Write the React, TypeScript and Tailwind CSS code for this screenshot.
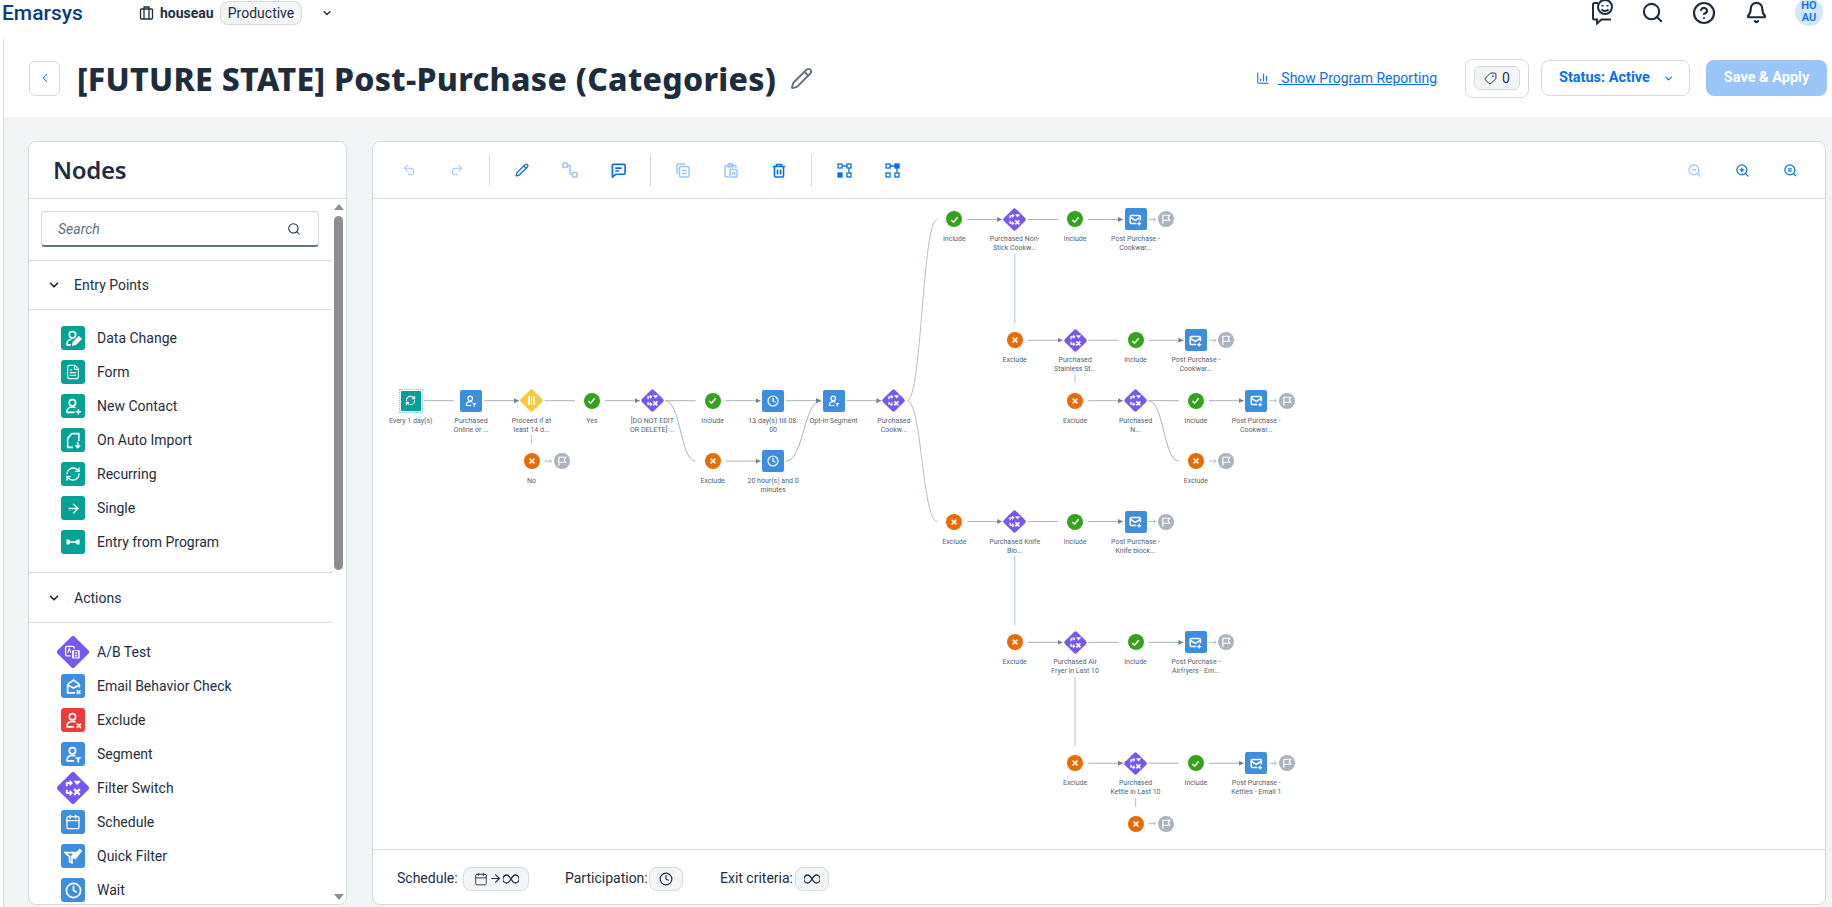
import {
  ArrowRight, Bell, Calendar, ChevronDown, ChevronLeft, CircleHelp, Clock, FileText, Pencil,
  Redo2, RefreshCw, Search, Tag, Undo2, ZoomIn, ZoomOut, ChartColumn,
} from 'lucide-react'
import type { ReactNode } from 'react'

const sans = 'font-["Noto_Sans",sans-serif]'
const ui = 'font-["Roboto",sans-serif]'

// flow canvas sits on a grid of 60.4px, origin is the first entry node
const ORIGIN_X = 373
const ORIGIN_Y = 199
const gx = (c: number) => 410.7 + 60.4 * c - ORIGIN_X
const gy = (r: number) => 400.7 + 60.42 * r - ORIGIN_Y

type Kind = 'entry' | 'segment' | 'yellow' | 'yes' | 'no' | 'switch' | 'clock' | 'mail' | 'flag'
type FlowNode = { c: number; r: number; kind: Kind; label?: string[] }

const branch = (
  c: number,
  r: number,
  first: string[],
  second: string[],
): FlowNode[] => [
  { c, r, kind: 'no', label: ['Exclude'] },
  { c: c + 1, r, kind: 'switch', label: first },
  { c: c + 2, r, kind: 'yes', label: ['Include'] },
  { c: c + 3, r, kind: 'mail', label: second },
  { c: c + 3.5, r, kind: 'flag' },
]

const NODES: FlowNode[] = [
  { c: 0, r: 0, kind: 'entry', label: ['Every 1 day(s)'] },
  { c: 1, r: 0, kind: 'segment', label: ['Purchased', 'Online or ...'] },
  { c: 2, r: 0, kind: 'yellow', label: ['Proceed if at', 'least 14 d...'] },
  { c: 3, r: 0, kind: 'yes', label: ['Yes'] },
  { c: 4, r: 0, kind: 'switch', label: ['[DO NOT EDIT', 'OR DELETE] ...'] },
  { c: 5, r: 0, kind: 'yes', label: ['Include'] },
  { c: 6, r: 0, kind: 'clock', label: ['13 day(s) till 08:', '00'] },
  { c: 7, r: 0, kind: 'segment', label: ['Opt-in Segment'] },
  { c: 8, r: 0, kind: 'switch', label: ['Purchased', 'Cookw...'] },
  { c: 2, r: 1, kind: 'no', label: ['No'] },
  { c: 2.5, r: 1, kind: 'flag' },
  { c: 5, r: 1, kind: 'no', label: ['Exclude'] },
  { c: 6, r: 1, kind: 'clock', label: ['20 hour(s) and 0', 'minutes'] },
  { c: 9, r: -3, kind: 'yes', label: ['Include'] },
  { c: 10, r: -3, kind: 'switch', label: ['Purchased Non-', 'Stick Cookw...'] },
  { c: 11, r: -3, kind: 'yes', label: ['Include'] },
  { c: 12, r: -3, kind: 'mail', label: ['Post Purchase -', 'Cookwar...'] },
  { c: 12.5, r: -3, kind: 'flag' },
  ...branch(10, -1, ['Purchased', 'Stainless St...'], ['Post Purchase -', 'Cookwar...']),
  ...branch(11, 0, ['Purchased', 'N...'], ['Post Purchase -', 'Cookwar...']),
  { c: 13, r: 1, kind: 'no', label: ['Exclude'] },
  { c: 13.5, r: 1, kind: 'flag' },
  ...branch(9, 2, ['Purchased Knife', 'Blo...'], ['Post Purchase -', 'Knife block...']),
  ...branch(10, 4, ['Purchased Air', 'Fryer in Last 10'], ['Post Purchase -', 'Airfryers - Em...']),
  ...branch(11, 6, ['Purchased', 'Kettle in Last 10'], ['Post Purchase -', 'Kettles - Email 1']),
  { c: 12, r: 7, kind: 'no', label: ['Exclude'] },
  { c: 12.5, r: 7, kind: 'flag' },
]

// [from column, row, has arrow head]
const LINKS: [number, number, boolean][] = [
  [0, 0, false], [1, 0, true], [2, 0, false], [3, 0, true], [4, 0, false], [5, 0, true], [6, 0, true], [7, 0, true],
  [5, 1, true],
  [9, -3, true], [10, -3, false], [11, -3, true],
  [10, -1, true], [11, -1, false], [12, -1, true],
  [11, 0, true], [12, 0, false], [13, 0, true],
  [9, 2, true], [10, 2, false], [11, 2, true],
  [10, 4, true], [11, 4, false], [12, 4, true],
  [11, 6, true], [12, 6, false], [13, 6, true],
]

// [column, first row offset in px from page, second]
const VERTICALS: [number, number, number][] = [
  [2, 435, 444], [10, 254, 323], [11, 375, 383], [10, 556, 625], [11, 677, 746], [12, 798, 807],
]

// [from column, row] of the little arrow in front of a flag
const FLAG_ARROWS: [number, number][] = [
  [2, 1], [12, -3], [13, -1], [14, 0], [13, 1], [12, 2], [13, 4], [14, 6], [12, 7],
]

const curve = (x1: number, y1: number, x2: number, y2: number) => {
  const mx = (x1 + x2) / 2
  return `M${x1} ${y1} C${mx} ${y1} ${mx} ${y2} ${x2} ${y2}`
}

function FlowLines() {
  return (
    <svg className="absolute inset-0" width="1454" height="643" fill="none">
      <defs>
        <marker id="head" markerWidth="6" markerHeight="6" refX="5" refY="2.5" orient="auto">
          <path d="M0 0L5 2.5L0 5z" fill="#72818f" />
        </marker>
      </defs>
      {LINKS.map(([c, r, arrow]) => (
        <path
          key={`${c}:${r}`}
          d={`M${gx(c) + 13} ${gy(r)}H${gx(c + 1) - (arrow ? 12.5 : 17)}`}
          stroke="#a9b4bf"
          markerEnd={arrow ? 'url(#head)' : undefined}
        />
      ))}
      {VERTICALS.map(([c, a, b]) => (
        <path key={`${c}:${a}`} d={`M${gx(c)} ${a - ORIGIN_Y}V${b - ORIGIN_Y}`} stroke="#c3cad1" strokeWidth="1.2" />
      ))}
      {FLAG_ARROWS.map(([c, r]) => (
        <path
          key={`${c}:${r}`}
          d={`M${gx(c) + 13} ${gy(r)}h7m-2 -2l2 2l-2 2`}
          stroke="#b4bdc6"
        />
      ))}
      <path d={curve(gx(4) + 13, gy(0), gx(5) - 17, gy(1))} stroke="#a9b4bf" />
      <path d={curve(gx(6) + 13, gy(1), gx(7) - 12.5, gy(0))} stroke="#a9b4bf" markerEnd="url(#head)" />
      <path d={curve(gx(8) + 13, gy(0), gx(9) - 17, gy(-3))} stroke="#b4bec8" />
      <path d={curve(gx(8) + 13, gy(0), gx(9) - 17, gy(2))} stroke="#b4bec8" />
      <path d={curve(gx(12) + 13, gy(0), gx(13) - 17, gy(1))} stroke="#a9b4bf" />
    </svg>
  )
}

function SwitchGlyph({ size = 14 }: { size?: number }) {
  return (
    <svg width={size} height={size} viewBox="0 0 16 16" fill="none" stroke="#fff" strokeWidth="1.7" className="-rotate-45 shrink-0">
      <path d="M6.500 3.500H2.500v3M6.500 12.500h-4v-3" />
      <path d="M5 1.500l2 2-2 2M5 10.500l2 2-2 2" strokeWidth="1.400" />
      <path d="M8.500 1.500h6.500l-3.250 4z" fill="#fff" stroke="none" />
      <path d="M9 9l5 5M14 9l-5 5" strokeWidth="2" />
    </svg>
  )
}

function MailGlyph({ size = 13 }: { size?: number }) {
  return (
    <svg width={size} height={size} viewBox="0 0 16 16" fill="none" stroke="#fff" strokeWidth="1.6">
      <path d="M9.500 14H2.500V6L8 2l5.500 4v3" />
      <path d="M2.500 6.500L8 9.500l5.500-3" />
      <path d="M11 11.500l3.500 3.500M14.500 11.500L11 15" strokeWidth="1.500" />
    </svg>
  )
}

// envelope used on the send-email nodes of the canvas
function SendGlyph() {
  return (
    <svg width="13" height="13" viewBox="0 0 16 16" fill="none" stroke="#fff" strokeWidth="1.900">
      <path d="M9 13H3a1.500 1.500 0 0 1-1.500-1.500v-7A1.500 1.500 0 0 1 3 3h9.500A1.500 1.500 0 0 1 14 4.500V9" />
      <path d="M2 5.500l5.750 3.500 5.750-3.500" />
      <path d="M12.500 10.500v5M10 13h5" strokeWidth="1.600" />
    </svg>
  )
}

function UserFilterGlyph({ size = 13 }: { size?: number }) {
  return (
    <svg width={size} height={size} viewBox="0 0 16 16" fill="none" stroke="#fff" strokeWidth="1.6">
      <circle cx="7" cy="4.500" r="3" />
      <path d="M8.500 14H2c-.7-3 1.500-5.200 5-5.200 1 0 2 .2 2.800.6" />
      <path d="M9.500 10.500h6l-3 3.400z" fill="#fff" stroke="none" />
      <path d="M12.500 13v2.500" />
    </svg>
  )
}

function FlagGlyph() {
  return (
    <svg width="10" height="10" viewBox="0 0 16 16" fill="none" stroke="#fff" strokeWidth="1.900">
      <path d="M3 15.500V2h11l-2.500 4 2.500 4H3" />
    </svg>
  )
}

function NodeShape({ kind }: { kind: Kind }) {
  if (kind === 'entry') {
    return (
      <div className="border border-dotted border-[#8fc7e6] p-[1px]">
        <div className="w-[20px] h-[20px] bg-[#04a197] rounded-[1px] flex items-center justify-center">
          <RefreshCw size={11} color="#fff" strokeWidth={2.2} />
        </div>
      </div>
    )
  }
  if (kind === 'segment' || kind === 'clock' || kind === 'mail') {
    return (
      <div className="w-[22px] h-[22px] bg-[#3f8ede] rounded-[2px] flex items-center justify-center">
        {kind === 'segment' && <UserFilterGlyph size={12} />}
        {kind === 'clock' && <Clock size={12} color="#fff" strokeWidth={2.4} />}
        {kind === 'mail' && <SendGlyph />}
      </div>
    )
  }
  if (kind === 'yellow' || kind === 'switch') {
    return (
      <div className={`w-[17px] h-[17px] rotate-45 rounded-[2px] flex items-center justify-center ${kind === 'yellow' ? 'bg-[#fdc837]' : 'bg-[#7358f5]'}`}>
        {kind === 'switch' ? (
          <SwitchGlyph size={13} />
        ) : (
          <div className="-rotate-45 w-[7px] h-[9px] border-x-[2px] border-white flex justify-center">
            <div className="w-[1px] h-full bg-white" />
          </div>
        )}
      </div>
    )
  }
  const bg = kind === 'yes' ? 'bg-[#36a11c]' : kind === 'no' ? 'bg-[#e96b06]' : 'bg-[#abb3bc]'
  return (
    <div className={`w-[16px] h-[16px] rounded-full flex items-center justify-center ${bg}`}>
      {kind === 'yes' && (
        <svg width="9" height="9" viewBox="0 0 10 10" fill="none" stroke="#fff" strokeWidth="1.6"><path d="M1.500 5.500L4 8l4.500-5.500" /></svg>
      )}
      {kind === 'no' && (
        <svg width="8" height="8" viewBox="0 0 10 10" fill="none" stroke="#fff" strokeWidth="1.9"><path d="M2 2l6 6M8 2l-6 6" /></svg>
      )}
      {kind === 'flag' && <FlagGlyph />}
    </div>
  )
}

function FlowNodeView({ node }: { node: FlowNode }) {
  return (
    <div
      className="absolute w-[60px] h-0 flex items-center justify-center"
      style={{ left: gx(node.c) - 30, top: gy(node.r) }}
    >
      <NodeShape kind={node.kind} />
      {node.label && (
        <div className={`absolute top-[16px] left-[-10px] right-[-10px] text-center text-[7px] leading-[9px] text-[#536372] ${ui}`}>
          {node.label.map(line => (
            <div key={line}>{line}</div>
          ))}
        </div>
      )}
    </div>
  )
}

const ENTRY_ITEMS: [string, ReactNode][] = [
  ['Data Change', (
    <svg width="17" height="17" viewBox="0 0 16 16" fill="none" stroke="#fff" strokeWidth="1.5">
      <circle cx="7" cy="4.500" r="3" />
      <path d="M5.500 14H2c-.5-3 1-5 4-5.300" />
      <path d="M7.500 14l.5-2.500L13 6.500l2 2-5 5z" fill="#fff" />
    </svg>
  )],
  ['Form', <FileText size={16} color="#fff" strokeWidth={1.7} />],
  ['New Contact', (
    <svg width="17" height="17" viewBox="0 0 16 16" fill="none" stroke="#fff" strokeWidth="1.5">
      <circle cx="7" cy="4.500" r="3" />
      <path d="M9 13.500H2c-.7-3 1.500-5 5-5 1 0 2 .2 2.800.6" />
      <path d="M12.500 10.500v5M10 13h5" />
    </svg>
  )],
  ['On Auto Import', (
    <svg width="17" height="17" viewBox="0 0 16 16" fill="none" stroke="#fff" strokeWidth="1.5">
      <path d="M7.500 14.500H2.500V6L6.500 1.500h6.500v7" />
      <path d="M12 9.500v5M9.800 12.500l2.200 2.200 2.200-2.200" />
    </svg>
  )],
  ['Recurring', <RefreshCw size={16} color="#fff" strokeWidth={2} />],
  ['Single', <ArrowRight size={15} color="#fff" strokeWidth={2.2} />],
  ['Entry from Program', (
    <svg width="16" height="16" viewBox="0 0 16 16" fill="#fff">
      <path d="M1.500 5.500h2.500l1.500 1.700h5l1.500-1.700h2.500v5H12L10.500 8.800h-5L4 10.500H1.500z" />
    </svg>
  )],
]

const ACTION_ITEMS: [string, ReactNode, string][] = [
  ['A/B Test', (
    <svg width="17" height="17" viewBox="0 0 16 16" fill="none" stroke="#fff" strokeWidth="1.300" className="-rotate-45 shrink-0">
      <rect x="1" y="2" width="8" height="9" rx="1" />
      <rect x="6.500" y="5" width="8.500" height="9" rx="1" fill="#fff" stroke="#7358f5" />
      <path d="M3 8l1.500-4L6 8" strokeWidth="1" />
      <path d="M9.500 7v5h2c1.500 0 1.500-2.500 0-2.500h-2h2c1.300 0 1.300-2.500 0-2.500z" stroke="#7358f5" strokeWidth="1" />
    </svg>
  ), 'switch'],
  ['Email Behavior Check', <MailGlyph size={17} />, 'bg-[#3f8ede]'],
  ['Exclude', (
    <svg width="17" height="17" viewBox="0 0 16 16" fill="none" stroke="#fff" strokeWidth="1.6">
      <circle cx="7" cy="4.500" r="3" />
      <path d="M8.500 14H2c-.7-3 1.500-5.200 5-5.200 1 0 2 .2 2.800.6" />
      <path d="M11 11l4 4M15 11l-4 4" />
    </svg>
  ), 'bg-[#f03a3a]'],
  ['Segment', <UserFilterGlyph size={17} />, 'bg-[#3f8ede]'],
  ['Filter Switch', <SwitchGlyph size={18} />, 'switch'],
  ['Schedule', <Calendar size={16} color="#fff" strokeWidth={2} />, 'bg-[#3f8ede]'],
  ['Quick Filter', (
    <svg width="18" height="18" viewBox="0 0 16 16" fill="none" stroke="#fff" strokeWidth="1.600">
      <path d="M1 5h8.500L7 8.500V14l-2-1V8.500z" />
      <path d="M8 9l6-6.500 1 1L10 10z" fill="#fff" />
    </svg>
  ), 'bg-[#3f8ede]'],
  ['Wait', <Clock size={17} color="#fff" strokeWidth={2.4} />, 'bg-[#3f8ede]'],
]

function SectionHead({ title }: { title: string }) {
  return (
    <div className="h-[50px] border-y border-[#d5dadd] flex items-center pl-[18px] gap-[13px] -mb-px">
      <ChevronDown size={14} strokeWidth={3} color="#1d2d3e" />
      <span className="text-[14px] pt-px text-[#1d2d3e]">{title}</span>
    </div>
  )
}

function ItemRow({ icon, label, tone }: { icon: ReactNode; label: string; tone: string }) {
  return (
    <div className="h-[34px] flex items-center pl-[32px] gap-[12px] shrink-0">
      {tone === 'switch' ? (
        <div className="w-[24px] h-[24px] flex items-center justify-center">
          <div className="w-[24px] h-[24px] shrink-0 rotate-45 bg-[#7358f5] rounded-[2px] flex items-center justify-center">{icon}</div>
        </div>
      ) : (
        <div className={`w-[24px] h-[24px] rounded-[3px] flex items-center justify-center ${tone}`}>{icon}</div>
      )}
      <span className="text-[14px] pt-px text-[#1d2d3e]">{label}</span>
    </div>
  )
}

function ToolButton({ children, className = '' }: { children: ReactNode; className?: string }) {
  return <div className={`w-[48px] flex justify-center ${className}`}>{children}</div>
}

const blue = '#0a6ef0'
const faded = '#9cc5f8'

function Sidebar() {
  return (
    <aside className={`w-[319px] h-[764px] bg-white border border-[#d5dadd] rounded-lg overflow-hidden flex flex-col ${ui}`}>
      <div className="h-[57px] flex items-center pl-[24px] border-b border-[#d5dadd] shrink-0">
        <h2 className={`text-[24px] font-semibold text-[#1d2d3e] tracking-[-0.3px] ${sans}`}>Nodes</h2>
      </div>
      <div className="relative flex-1 overflow-hidden">
        <div className="w-[303px]">
          <div className="h-[61px] px-[12px] pt-[12px]">
            <div className="h-[36px] w-[278px] border border-[#d5dadd] border-b-2 border-b-[#5b738b] rounded-[4px] flex items-center justify-between pl-[16px] pr-[17px]">
              <span className="text-[14px] pt-px italic text-[#5b6f82]">Search</span>
              <Search size={14} color="#1d2d3e" strokeWidth={1.8} />
            </div>
          </div>
          <SectionHead title="Entry Points" />
          <div className="pt-[12px] pb-[12px] border-b border-[#d5dadd] h-[264px]">
            {ENTRY_ITEMS.map(([label, icon]) => (
              <ItemRow key={label} icon={icon} label={label} tone="bg-[#04a197]" />
            ))}
          </div>
          <div className="h-[50px] flex items-center pl-[18px] gap-[13px] border-b border-[#d5dadd]">
            <ChevronDown size={14} strokeWidth={3} color="#1d2d3e" />
            <span className="text-[14px] pt-px text-[#1d2d3e]">Actions</span>
          </div>
          <div className="pt-[12px]">
            {ACTION_ITEMS.map(([label, icon, tone]) => (
              <ItemRow key={label} icon={icon} label={label} tone={tone} />
            ))}
          </div>
        </div>
        <div className="absolute top-0 bottom-0 right-[3px] w-[9px] flex flex-col items-center">
          <div className="mt-[5px] w-0 h-0 border-x-[5px] border-x-transparent border-b-[6px] border-b-[#8e8e8e]" />
          <div className="mt-[6px] w-[9px] h-[354px] rounded-full bg-[#8e8e8e]" />
          <div className="mt-auto mb-[4px] w-0 h-0 border-x-[5px] border-x-transparent border-t-[6px] border-t-[#8e8e8e]" />
        </div>
      </div>
    </aside>
  )
}

function Toolbar() {
  return (
    <div className="h-[57px] flex items-center border-b border-[#d5dadd] shrink-0 pl-[12px] pr-[11px]">
      <ToolButton><Undo2 size={14} color={faded} strokeWidth={1.8} /></ToolButton>
      <ToolButton><Redo2 size={14} color={faded} strokeWidth={1.8} /></ToolButton>
      <div className="w-px h-[32px] bg-[#d5dadd] mx-[8px]" />
      <ToolButton><Pencil size={14} color={blue} strokeWidth={2.2} /></ToolButton>
      <ToolButton>
        <svg width="16" height="16" viewBox="0 0 16 16" fill="none" stroke={faded} strokeWidth="1.600">
          <rect x="1" y="1" width="4.500" height="4.500" rx="1" />
          <rect x="10.500" y="10.500" width="4.500" height="4.500" rx="1" />
          <path d="M5.500 3.500h1.500a1 1 0 0 1 1 1v7a1 1 0 0 0 1 1h1.500" />
        </svg>
      </ToolButton>
      <ToolButton>
        <svg width="15" height="15" viewBox="0 0 16 16" fill="none" stroke={blue} strokeWidth="1.800">
          <path d="M3 1.500h11a1 1 0 0 1 1 1v8.500a1 1 0 0 1-1 1H5l-3.500 3V2.500a1 1 0 0 1 1-1z" />
          <path d="M4.500 5.500h7M4.500 8.500h4" />
        </svg>
      </ToolButton>
      <div className="w-px h-[32px] bg-[#d5dadd] mx-[8px]" />
      <ToolButton>
        <svg width="14" height="15" viewBox="0 0 14 15" fill="none" stroke={faded} strokeWidth="1.500">
          <path d="M1 11V2.500A1.500 1.500 0 0 1 2.500 1H9" />
          <rect x="3.500" y="3.500" width="9.500" height="10.500" rx="1.500" />
          <path d="M6 7.500h4.500M6 10.500h4.500" />
        </svg>
      </ToolButton>
      <ToolButton>
        <svg width="14" height="15" viewBox="0 0 14 15" fill="none" stroke={faded} strokeWidth="1.500">
          <path d="M5 14H2.500A1.500 1.500 0 0 1 1 12.500V4a1.500 1.500 0 0 1 1.500-1.500h8A1.500 1.500 0 0 1 12 4v1" />
          <path d="M4 2.500a2.500 2 0 0 1 5 0V4H4z" />
          <rect x="6" y="6.500" width="7" height="7.500" rx="1" />
          <path d="M8.500 9v3M10.500 9v3" />
        </svg>
      </ToolButton>
      <ToolButton>
        <svg width="14" height="15" viewBox="0 0 14 15" fill="none" stroke={blue} strokeWidth="1.600">
          <path d="M1 3.500h12M4.500 3.500V1.500h5v2" />
          <path d="M2.500 3.500V13a1 1 0 0 0 1 1h7a1 1 0 0 0 1-1V3.500" />
          <path d="M5.500 6.500v5M8.500 6.500v5" />
        </svg>
      </ToolButton>
      <div className="w-px h-[32px] bg-[#d5dadd] mx-[8px]" />
      <ToolButton>
        <svg width="15" height="15" viewBox="0 0 15 15" fill="none" stroke={blue} strokeWidth="1.300">
          <rect x="1" y="1" width="4" height="4" />
          <rect x="10" y="1" width="4" height="4" />
          <rect x="1" y="10" width="4" height="4" fill={blue} />
          <rect x="10" y="10" width="4" height="4" />
          <path d="M5 3h5M12 5v5" />
        </svg>
      </ToolButton>
      <ToolButton>
        <svg width="15" height="15" viewBox="0 0 15 15" fill="none" stroke={blue} strokeWidth="1.300">
          <rect x="1" y="1" width="4" height="4" />
          <rect x="10" y="1" width="4" height="4" fill={blue} />
          <rect x="1" y="10" width="4" height="4" />
          <rect x="10" y="10" width="4" height="4" />
          <path d="M5 3h5M12 5v5" />
        </svg>
      </ToolButton>
      <div className="ml-auto flex">
        <ToolButton><ZoomOut size={15} color={faded} strokeWidth={2} /></ToolButton>
        <ToolButton><ZoomIn size={15} color={blue} strokeWidth={2} /></ToolButton>
        <ToolButton>
          <svg width="15" height="15" viewBox="0 0 24 24" fill="none" stroke={blue} strokeWidth="2">
            <circle cx="11" cy="11" r="8" />
            <path d="M21 21l-4.300-4.300M8 9.500h6M8 12.500h6" />
          </svg>
        </ToolButton>
      </div>
    </div>
  )
}

function Pill({ children, className = '' }: { children: ReactNode; className?: string }) {
  return (
    <div className={`h-[24px] shrink-0 bg-[#f3f4f6] border border-[#d5dadd] rounded-lg flex items-center justify-center text-[#1d2d3e] ${className}`}>
      {children}
    </div>
  )
}

const Infinity8 = () => (
  <svg width="16" height="10" viewBox="0 0 16 10" fill="none" stroke="#1d2d3e" strokeWidth="1.300">
    <path d="M8 5C6.500 2.500 5.500 1 3.800 1a4 4 0 0 0 0 8C5.500 9 6.500 7.500 8 5c1.500-2.500 2.500-4 4.200-4a4 4 0 0 1 0 8C10.500 9 9.500 7.500 8 5z" />
  </svg>
)

function Footer() {
  return (
    <div className={`mt-[8px] h-[55px] pt-[3px] border-t border-[#d5dadd] flex items-center pl-[24px] text-[14px] text-[#1d2d3e] whitespace-nowrap ${ui}`}>
      <span className="w-[66px]">Schedule:</span>
      <Pill className="w-[66px]">
        <Calendar size={14} strokeWidth={1.5} />
        <ArrowRight size={13} strokeWidth={2} className="mx-[1px]" />
        <Infinity8 />
      </Pill>
      <span className="ml-[36px] w-[84px]">Participation:</span>
      <Pill className="w-[34px]"><Clock size={14} strokeWidth={2} /></Pill>
      <span className="ml-[37px] w-[75px]">Exit criteria:</span>
      <Pill className="w-[34px]"><Infinity8 /></Pill>
    </div>
  )
}

function TopBar() {
  return (
    <div className={`h-[35px] pb-[9px] flex items-center bg-white ${ui}`}>
      <span className="ml-[2px] text-[21px] leading-none font-medium text-[#0a3a80] w-[137px]">Emarsys</span>
      <svg width="15" height="14" viewBox="0 0 15 14" fill="none" stroke="#1d2d3e" strokeWidth="1.300">
        <rect x="1.500" y="3" width="12" height="10" rx="1" />
        <path d="M5 3V1h5v2M5 3v10M10 3v10" />
      </svg>
      <span className="ml-[6px] w-[55px] text-[14px] font-bold text-[#1d2d3e]">houseau</span>
      <div className="ml-[5px] h-[24px] w-[82px] bg-[#f3f4f6] border border-[#d5dadd] rounded-lg flex items-center justify-center text-[14px] text-[#1d2d3e]">
        Productive
      </div>
      <ChevronDown size={12} strokeWidth={2.5} color="#1d2d3e" className="ml-[19px]" />
      <div className="ml-auto flex items-center">
        <svg width="26" height="26" viewBox="0 0 26 26" fill="none" stroke="#1d2d3e" strokeWidth="2" className="-mt-[3px]">
          <path d="M8 4H4.500a1.500 1.500 0 0 0-1.500 1.500V19a1.500 1.500 0 0 0 1.500 1.500H7v4l4.500-4H21" />
          <circle cx="15" cy="8" r="7" />
          <path d="M11.500 10.500c2 2 5 2 7 0" />
          <path d="M12.500 6v1.500M17.500 6v1.500" />
        </svg>
        <Search size={23} strokeWidth={2.2} color="#1d2d3e" className="ml-[25px] -mt-[1px]" />
        <CircleHelp size={24} strokeWidth={2.2} color="#1d2d3e" className="ml-[28px] -mt-[1px]" />
        <Bell size={23} strokeWidth={2.2} color="#1d2d3e" className="ml-[29px] -mt-[1px]" />
        <div className="ml-[27px] mr-[9px] w-[28px] h-[28px] -mt-[3px] rounded-full bg-[#cfe8fb] text-[#0a6ef0] text-[11px] leading-[12px] font-semibold text-center flex items-center justify-center">
          HO<br />AU
        </div>
      </div>
    </div>
  )
}

function PageHeader() {
  return (
    <div className="h-[82px] shrink-0 bg-white flex items-center pl-[25px] pr-[5px] pt-[4px]">
      <div className="w-[31px] h-[35px] border border-[#d5dadd] rounded-md flex items-center justify-center">
        <ChevronLeft size={14} color={blue} strokeWidth={1.8} />
      </div>
      <h1 className={`ml-[17px] mt-[2px] text-[32px] font-extrabold leading-none tracking-[0.3px] text-[#1d2d3e] whitespace-nowrap ${sans}`}>
        [FUTURE STATE] Post-Purchase (Categories)
      </h1>
      <Pencil size={23} color="#5f7385" strokeWidth={2} className="ml-[14px]" />
      <div className={`ml-auto flex items-center ${ui}`}>
        <ChartColumn size={14} color={blue} strokeWidth={1.8} />
        <a className="ml-[8px] pt-px text-[14px] text-[#0a6ef0] underline whitespace-pre">{' Show Program Reporting'}</a>
        <div className="ml-[28px] w-[64px] h-[39px] border border-[#d5dadd] rounded-lg flex items-center justify-center">
          <div className="w-[46px] h-[24px] bg-[#f3f4f6] border border-[#d5dadd] rounded-md flex items-center justify-center gap-[5px] text-[14px] text-[#1d2d3e]">
            <Tag size={13} strokeWidth={1.8} className="rotate-90" />0
          </div>
        </div>
        <div className="ml-[12px] w-[149px] h-[36px] border border-[#d5dadd] rounded-lg flex items-center pl-[17px] text-[14.5px] font-bold text-[#0a6ef0]">
          <span className="w-[92px] whitespace-nowrap">Status: Active</span>
          <ChevronDown size={11} strokeWidth={2.6} className="ml-[12px]" />
        </div>
        <div className="ml-[16px] w-[121px] h-[36px] rounded-lg bg-[#99c5f8] flex items-center justify-center text-[14.5px] font-bold text-white">
          Save &amp; Apply
        </div>
      </div>
    </div>
  )
}

export default function App() {
  return (
    <div className="w-[1832px] h-[907px] overflow-hidden bg-white flex flex-col">
      <TopBar />
      <div className="flex-1 ml-[3px] border-l border-[#d5dadd] rounded-tl-lg overflow-hidden flex flex-col">
        <PageHeader />
        <div className="flex-1 bg-[#f3f4f6] flex gap-[25px] pt-[24px] pl-[24px]">
          <Sidebar />
          <main className="w-[1454px] h-[764px] bg-white border border-[#d5dadd] rounded-lg overflow-hidden flex flex-col">
            <Toolbar />
            <div className="relative h-[643px] overflow-hidden">
              <FlowLines />
              {NODES.map(node => (
                <FlowNodeView key={`${node.c}:${node.r}`} node={node} />
              ))}
            </div>
            <Footer />
          </main>
        </div>
      </div>
    </div>
  )
}
